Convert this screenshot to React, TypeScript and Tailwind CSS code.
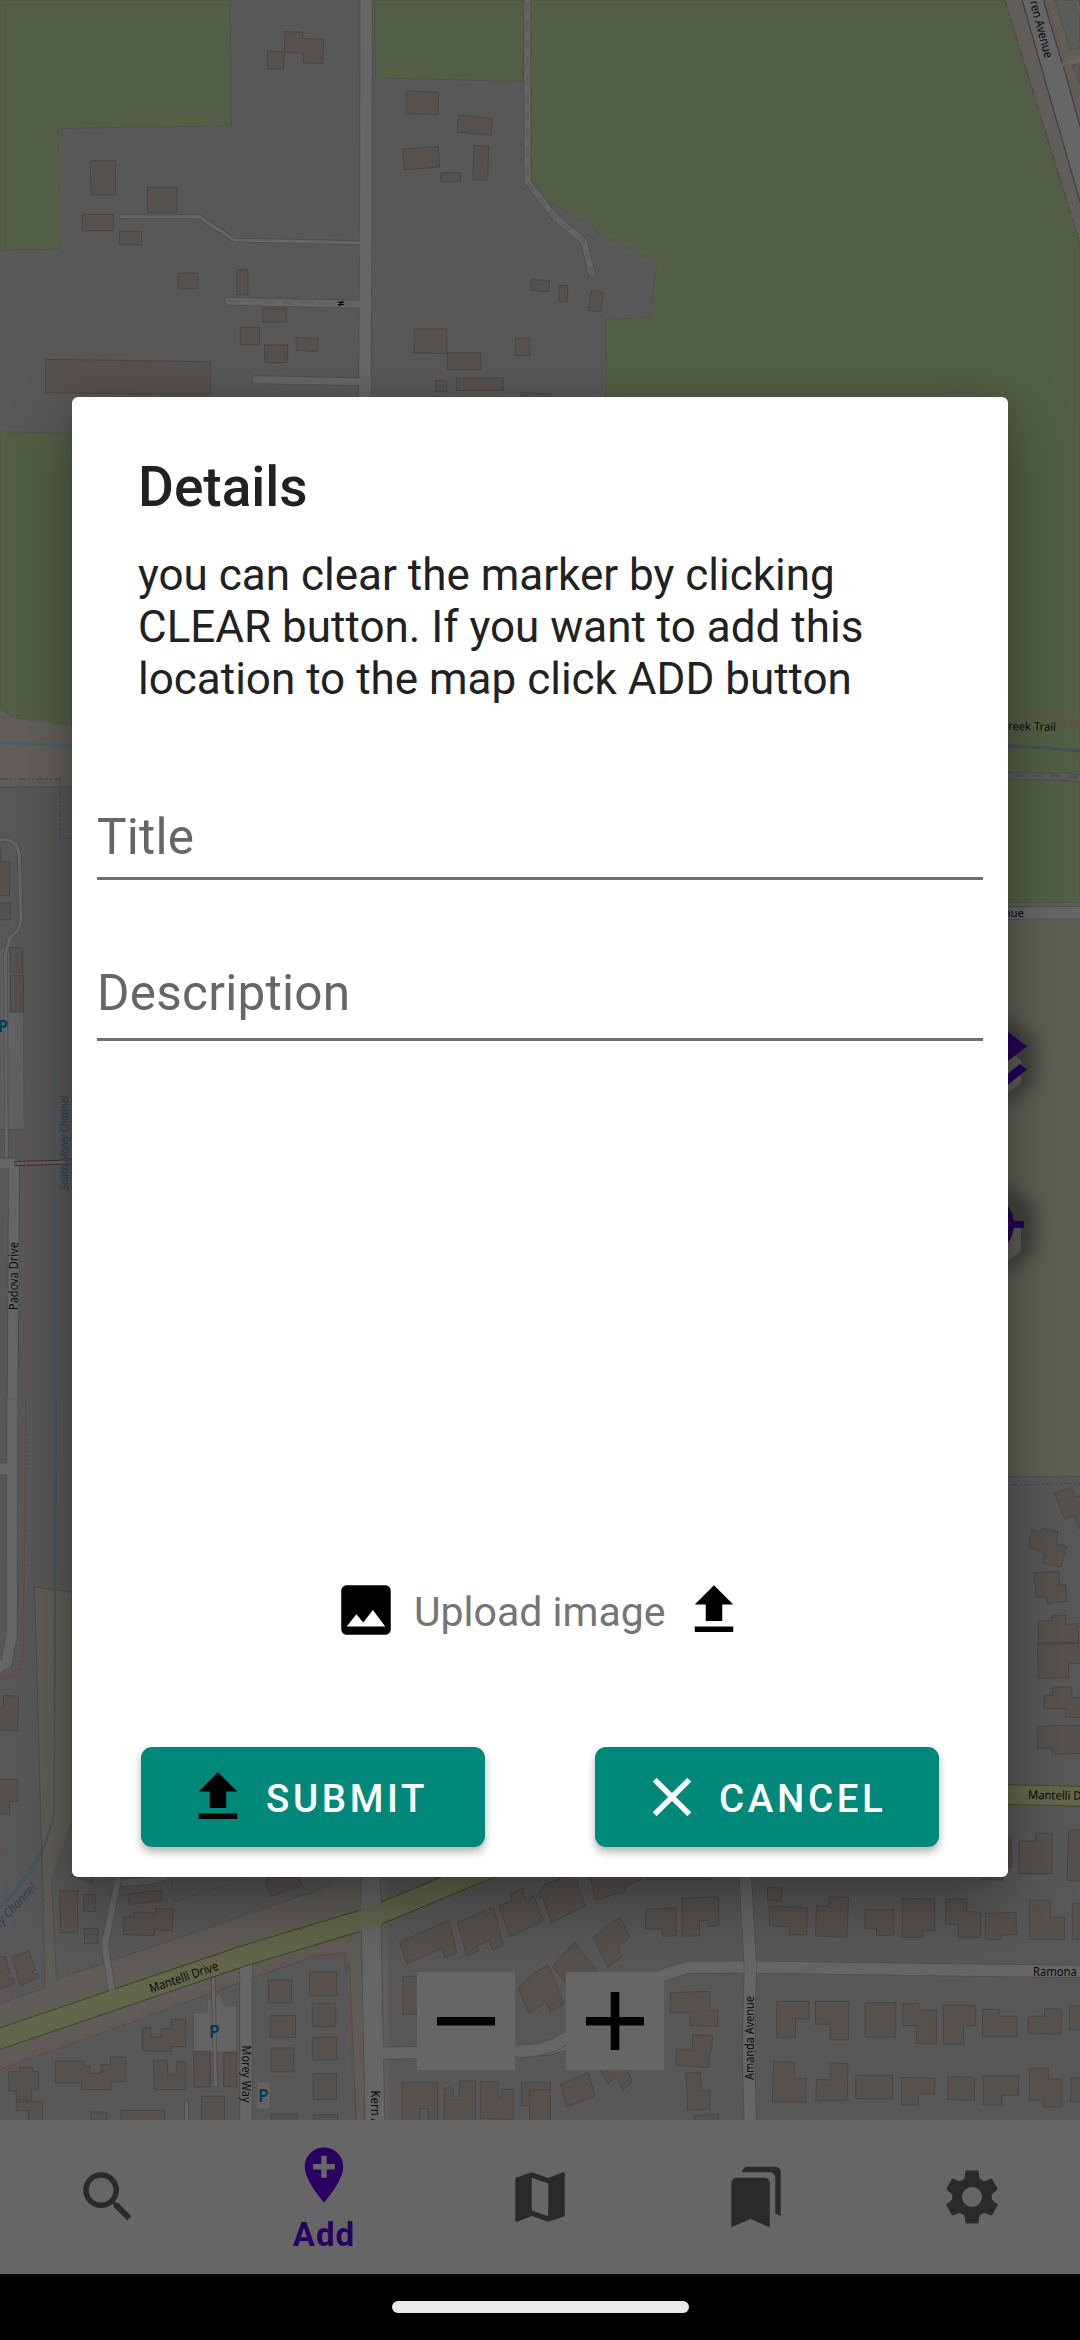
import React from 'react';
import { MdSearch, MdAddLocation, MdMap, MdBookmarks, MdSettings, MdImage, MdFileUpload, MdClose } from 'react-icons/md';

const building = { fill: '#57514d', stroke: '#4a4441', strokeWidth: 1 };

function Road({ d, w = 6, fill = '#666666', edge = '#4c4c4c', cap = 'round' as 'round' | 'butt' }) {
  return (
    <g fill="none" strokeLinecap={cap} strokeLinejoin="round">
      <path d={d} stroke={edge} strokeWidth={w + 1.6} />
      <path d={d} stroke={fill} strokeWidth={w} />
    </g>
  );
}

function Label({ x, y, len, r = 0, size = 12, color = '#0b0b0b', halo = '#666', children }: {
  x: number; y: number; len: number; r?: number; size?: number; color?: string; halo?: string; children: React.ReactNode;
}) {
  return (
    <text transform={`translate(${x} ${y}) rotate(${r})`} textLength={len} lengthAdjust="spacingAndGlyphs" fontSize={size} fill={color} stroke={halo} strokeWidth={1.5} style={{ paintOrder: 'stroke' }}>
      {children}
    </text>
  );
}

const trail = { fill: 'none', stroke: '#7d4642', strokeWidth: 1.2, strokeDasharray: '2.2 2' };
const border = { fill: 'none', stroke: '#54484f', strokeWidth: 1.4, strokeDasharray: '8 2 2 2 2 2' };

function MapView() {
  return (
    <svg className="absolute inset-0 [&_path]:[vector-effect:non-scaling-stroke]" width="1080" height="2340" viewBox="0 0 1080 2340" fontFamily="'Noto Sans', sans-serif">
      <rect width="1080" height="2340" fill="#585858" />

      {/* fields north of the creek */}
      <g transform="scale(.34439 .33333)">
        <g fill="#525e45" stroke="#4c5244" strokeWidth="0.7">
          <path d="M0 0H668L672 377L350 382L168 386L173 748L0 751Z" />
          <path d="M1087 0H1522L1518 245L1090 233Z" />
          <path d="M1540 0H2918L3136 730V2710H1758V957L1888 952L1907 788L1740 700L1580 592L1542 540Z" />
        </g>
        <Road d="M1063 0L1062 700L1059 1200" w={11.5} cap="butt" />
        <Road d="M352 650H578L680 720L1046 728" w={3} />
        <Road d="M664 904L1044 913" w={7} />
        <path d="M668 904L950 910M1002 912H1044" fill="none" stroke="#606060" strokeWidth="3" strokeLinecap="round" strokeDasharray="8 10" />
        <path d="M981 907H999M981 914H999M994 902L986 919" fill="none" stroke="#111" strokeWidth="1.2" />
        <Road d="M744 1139L1046 1145" w={7} />
        <path d="M1061 690V760M1061 890V935M1060 1130V1160" stroke="#666" strokeWidth="11.5" />
        <Road d="M1531 0L1532 545L1610 650L1696 725L1718 820" w={6} />
        <path d="M1531 12L1532 545L1610 650L1696 725L1718 820" fill="none" stroke="#5e5e5e" strokeWidth="3" strokeLinecap="round" strokeDasharray="8 10" />
        <path {...building} d="M827 95L879 97V116L940 118L937 191L881 189V159L826 157ZM776 153L826 156L823 208L776 206ZM1181 273L1274 277L1271 344L1179 341ZM1332 345L1431 356L1426 406L1327 396ZM1170 447L1272 439L1277 501L1174 509ZM1377 437L1419 439L1416 541L1373 539ZM1280 519H1338V545H1280ZM262 482H335L336 584H264ZM428 562H513V637H428ZM239 643H329V692H239ZM347 694H411V734H347ZM517 819H574V866H517ZM688 808H720V884H688ZM763 925H831V966H763ZM698 982H754V1034H698ZM860 1012L924 1015L922 1055L860 1051ZM768 1035H835V1088H768ZM132 1078L612 1085V1185L132 1178ZM1203 987H1297V1061L1202 1058ZM1299 1058H1396V1109H1299ZM1496 1015H1538V1067H1496ZM1266 1141H1297V1175H1265ZM1325 1134H1461V1171H1325ZM1511 1178L1599 1181V1220H1511ZM1543 838L1596 842L1593 875L1540 870ZM1624 856H1648V905H1624ZM1718 871L1752 877L1744 935L1708 930Z" />
      </g>

      {/* avenue in the north-east corner */}
      <g transform="translate(540 0) scale(.34439 .33333)">
        <path d="M1350 0H1568V730Z" fill="#625e5a" />
        <path d="M1478 0H1568V300Z" fill="#635f53" />
        <path d="M1495 0L1540 150L1568 143V0ZM1545 195L1568 190V255Z" fill="#5b5b58" stroke="#4c4c48" strokeWidth=".8" />
        <path d="M1555 0L1568 30" fill="none" stroke="#6c6c6c" strokeWidth="1" />
        <path d="M1400 0L1480 290L1568 605V380L1518 195L1462 0Z" fill="#666" />
        <path d="M1518 186L1568 170V188L1520 197Z" fill="#666" />
        <path d="M1400 0L1480 290L1568 605M1462 0L1516 190M1520 198L1568 380" fill="none" stroke="#3f3f3f" strokeWidth="1.2" />
        <path {...trail} d="M1470 0L1568 330" />
        <path {...border} d="M1350 0L1430 270L1568 730" />
      </g>
      <Label x={1027} y={-8} len={69} r={75} size={12.5}>Wren Avenue</Label>

      {/* western strip beside the channel */}
      <path d="M0 432L72 433V730L12 717L0 709Z" fill="#525e45" stroke="#4a5242" strokeWidth=".7" />
      <g transform="translate(0 700) scale(.33333 .44643)">
        <path d="M0 20L40 41L216 58V195H0Z" fill="#635f5b" />
        <path d="M0 181H216V195H0Z" fill="#605e57" />
        <path d="M0 195H216" stroke="#4c4c4c" strokeWidth="1" />
        <path d="M0 38L216 45" fill="none" stroke="#6a5550" strokeWidth="1.2" strokeDasharray="4 2" />
        <path d="M0 96L216 103" fill="none" stroke="#47606b" strokeWidth="2.5" />
        <path {...border} d="M0 177H180V310H216" />
        <path d="M216 205Q185 285 173 400L170 1568" fill="none" stroke="#47606b" strokeWidth="1.3" />
        <path d="M0 555H68L73 962H0Z" fill="#626262" stroke="#555053" strokeWidth="1" />
        <Road d="M-6 313H25L48 323L58 345L63 495L52 517L28 535L17 570L19 1030" w={3} />
        <Road d="M-8 1038H42L38 1568" w={10} />
        <path {...building} d="M-4 330H2V363H29V438H-4ZM-4 455H32V492H-4ZM30 555H68V611H30ZM31 616H71V699H31Z" />
        <path d="M43 1038L216 1035" stroke="#303030" strokeWidth="5" />
        <path d="M44 1038L216 1035" stroke="#6b6260" strokeWidth="3" />
        <path {...trail} d="M0 979L55 983L78 1015V1568" />
        <path {...trail} d="M46 1038L216 1035" />
      </g>
      <text x="-2" y="1032" fontSize="16" fontWeight="600" fill="#003a5c">P</text>
      <Label x={68} y={1190} len={94} r={-90} size={11.5} color="#28405c" halo="#555"><tspan fontStyle="italic">South Morey Channel</tspan></Label>
      <Label x={18} y={1310} len={68} r={-90} size={12}>Padova Drive</Label>

      <g transform="translate(0 1400) scale(.33333)">
        <path d="M104 561L216 577V1270L153 1440L155 1500H128L122 1240Z" fill="#605e57" stroke="#4b4a45" strokeWidth=".8" />
        <Road d="M-8 207H30" w={11} />
        <Road d="M37 -4L35 702L20 790L-6 802" w={10.5} cap="butt" />
        <path d="M10 191H24V223H10Z" fill="#666" />
        <path {...trail} stroke="#84342e" d="M77 0L71 700L69 770L48 828L-4 838M0 1340L6 1375" />
        <path d="M169 0L162 1240Q145 1350 20 1500" fill="none" stroke="#3f5660" strokeWidth="1.5" />
        <path {...building} d="M-4 924H10V886L56 889L53 992L-4 989ZM-4 1138H53V1204H29V1242H-4Z" />
      </g>

      {/* eastern strip */}
      <path d="M1008 903H1080V1476H1008Z" fill="#5f5f56" />
      <g transform="translate(960 640) scale(.33333 .44643)">
        <path d="M120 170Q210 163 360 182M200 174Q280 174 360 196" fill="none" stroke="#7d4642" strokeWidth="1.4" strokeDasharray="3 2.5" />
        <path d="M120 237Q230 238 360 249" fill="none" stroke="#435058" strokeWidth="3" />
        <Road d="M120 304L320 306L370 312" w={6} fill="#5c5c5c" />
        <path d="M168 304H320L370 311" fill="none" stroke="#515151" strokeWidth="3" strokeLinecap="round" strokeDasharray="7 11" />
        <Road d="M120 611H370" w={12} />
        <path d="M120 597H370" stroke="#505050" strokeWidth="1" />
      </g>
      <Label x={1001} y={730} len={55} r={1} size={11.5} halo="#525e45">Creek Trail</Label>
      <Label x={984} y={917} len={40} size={11.5}>Avenue</Label>
      <g transform="translate(960 1340) scale(.33333 .35714)">
        <path d="M120 382H360" stroke="#4f4e48" strokeWidth="1" />
        <path {...border} d="M150 406L360 401" />
        <path {...building} d="M283 429L333 412L345 441L366 435V540L340 491L314 500ZM214 530L243 539L246 527L294 537L289 571L321 578L302 635L247 625L255 597L204 580ZM222 653L295 647L299 686L317 684L321 732L262 737L259 719L229 720ZM235 788L275 785V772L317 770V796L353 795L356 846L236 849ZM232 853L366 848V906H326V946L235 948ZM252 995H277V972H335V1001H366V1057H316V1032H252ZM231 1082L366 1078V1158L275 1160V1142L232 1143ZM140 1392H153V1478L128 1480V1512L62 1510V1480ZM178 1404H227V1382H275V1494H178ZM328 1395L366 1396V1515L322 1513Z" />
        <Road d="M120 1272L370 1278" w={19} fill="#62664a" edge="#3d4218" />
      </g>
      <Label x={1028} y={1799} len={73} r={1} size={12} halo="#62664a">Mantelli Drive</Label>

      {/* streets south of the dialog, west half */}
      <g transform="translate(0 1840) scale(.34439 .33333)">
        <path d="M-6 494L128 444L130 0H194L150 120L164 418L300 372L960 136L1010 80H1125L1130 900H1040L1015 370L1000 338L920 346L730 410L400 540L-6 690Z" fill="#605d58" />
        <path d="M-6 494L130 443L122 0M192 0L150 120L164 418L965 136L1000 98M-6 690L400 540L730 415L920 346L1000 338L1005 400L1015 370L1036 900M496 118L508 184L712 117" fill="none" stroke="#4d4d4d" strokeWidth=".9" />
        <path d="M562 518L600 516L603 480L640 461L652 499L687 497V636H562ZM745 725H785V808H745Z" fill="#646262" stroke="#555053" strokeWidth=".8" />
        <Road d="M347 128L430 124L510 100" w={6.5} />
        <Road d="M346 100L304 316L326 460" w={6.5} />
        <Road d="M619 405L626 736" w={2.8} />
        <Road d="M714 370V900" w={11.5} />
        <Road d="M542 787V900" w={3} />
        <Road d="M1075 0L1080 400L1090 900" w={19} />
        <Road d="M1116 640L1500 631L1590 628L1665 605" w={11.5} cap="butt" />
        <path d="M1084 622H1120V656H1086Z" fill="#666" />
        <Road d="M-40 610L700 350L1078 232L1500 50" w={19.5} fill="#62664a" edge="#353b10" cap="butt" />
        <path d="M1047 195L1106 176L1108 255L1050 278Z" fill="#666664" />
        <path d="M1048 205L1106 182L1108 250L1050 272Z" fill="#646652" />
        <path d="M697 385L732 373V410H697Z" fill="#666" />
        <path d="M316 452L334 446V456L318 462Z" fill="#666" />
        <path {...trail} d="M0 681L340 552L700 415M734 403L900 343L958 331L1000 350L1015 385L1019 600L1024 850" />
        <path {...trail} d="M0 20L6 45L-2 62" />
        <path d="M136 0Q90 130 -6 206" fill="none" stroke="#3f5660" strokeWidth="1.5" />
        <path {...building} d="M175 152H225V278H175ZM243 163H278V214H243ZM245 265H284V310H245ZM205 106L270 110L267 128ZM370 163L467 150L469 181L375 194ZM358 230L390 229V216L452 219L454 205L504 209L500 272L448 269V287L358 283ZM770 118L790 112H868L877 136L787 169ZM-6 354L15 348L28 402H21L25 418L38 416L42 430L-6 450ZM36 352L85 333L102 390L94 392L96 402H108L112 413L59 437ZM414 562H438V592H468V565H497V538H539V620H498V635L414 632ZM161 664H243V678H262V700H294V674H320V651H365V724H323V749H236V728H161ZM446 661H486V704H512V665H539V749H448ZM25 695H57V682H94V695H112V748H92V779H47V753H26ZM47 784H124V900H82V812H48ZM265 816H310V900H265ZM351 811H478V900H351ZM562 634H611V740L564 742ZM650 637H687V740H650ZM585 769H652V900H585ZM779 420H847V488H779ZM785 527H858V592H785ZM786 624H853V695H786ZM898 396H978V468H898ZM907 490H975V560H907ZM907 592H978V660H907ZM910 701H977V778H910ZM787 822H863V900H787ZM910 824H980V900H910ZM1161 307L1302 241L1327 337L1291 353L1283 325L1181 371ZM1328 247L1432 201L1461 314L1430 331L1420 300L1386 318L1388 335L1356 348ZM1449 199L1487 178L1482 163L1517 144L1527 178L1550 168L1577 243L1481 290ZM1170 409H1240V523H1170ZM1168 727H1271V900H1243V807H1219V900H1168ZM1290 744H1316V769H1334V723H1380V900H1288ZM1395 725H1446V771H1457V748H1490V838L1395 836ZM1514 727H1598V900H1543V798H1514Z" />
      </g>
      <Label x={151} y={1993} len={72} r={-19} size={12.5} halo="#62664a">Mantelli Drive</Label>
      <Label x={242} y={2045.5} len={57} r={90} size={12}>Morey Way</Label>
      <Label x={371} y={2090.5} len={68} r={90} size={12}>Kern Avenue</Label>
      <Label x={-4} y={1932} len={60} r={-47} size={12.5} color="#28405c" halo="#585858"><tspan fontStyle="italic">rey Channel</tspan></Label>
      <g fontSize="17" fontWeight="600" fill="#003a5c"><text x="209" y="2038">P</text><text x="258" y="2102">P</text></g>

      {/* east half */}
      <g transform="translate(540 1840) scale(.34439 .33333)">
        <Road d="M-60 635L0 628L40 615L120 570L340 412L428 382L594 381L1600 395" w={11.5} />
        <Road d="M595 90L611 380L605 640L612 900" w={11.5} cap="butt" />
        <path d="M593 368H629V399H593Z" fill="#666" />
        <path {...building} d="M-8 170L12 135L100 100L131 198L34 248L8 170ZM145 105L296 100V118L247 136L249 153L161 181ZM308 100H498V119H308ZM155 291L232 231L260 291L226 318L241 349L197 381ZM37 380L100 306L163 391L90 450ZM-63 445L-20 400L24 375L69 492L31 516L18 487L-32 520ZM60 733L140 699L160 767L78 801ZM170 680H250L268 727L241 749L222 711L197 731ZM-30 750H30V900H-30ZM306 208L394 205L396 287L356 289L355 266L307 268ZM412 174L519 171V257L486 258L485 241H463V287L413 289ZM661 142L702 145L699 182L660 180ZM667 198L777 203L774 285L725 283V261L666 255ZM803 197L838 199L841 170L896 172L891 292L800 288ZM943 209H1027V286H977V265H943ZM1053 175L1146 178V271H1111V292H1051ZM1180 178H1239V216H1280V292H1215V254L1177 252ZM1293 220L1382 217L1384 283L1338 286V298H1293ZM1421 181H1483V232H1523V298H1421ZM1546 190H1600V298H1546ZM1280 90H1343V119H1280ZM1391 4H1440V-20H1486V101H1391ZM1535 -30H1600V122H1530ZM1360 0H1367V83H1360ZM378 458L493 454V511H516V559L436 557V518H378ZM444 583L501 588L498 632L493 635L490 683L394 676L396 627L442 629ZM423 699L466 697L469 751H493V807L429 811ZM450 827L519 823V900H450ZM687 484H781V536H742V592H687ZM800 484H896V599H843V553H800ZM944 488H1033V592H944ZM1054 491H1103V511H1151V611H1093V557H1054ZM1171 496H1265V558H1230V613H1171ZM1285 508H1334V529H1384V590H1285ZM1418 529H1464L1466 505L1515 508L1512 583L1416 579ZM1537 497H1600V569H1537ZM678 664L739 667V714L772 716L771 787L675 785ZM803 718L842 720L844 669L894 671L892 782H801ZM917 706H1024V776H917ZM1049 712L1146 714V762H1099V795L1049 794ZM1185 710L1262 712L1261 781L1183 778ZM1287 707H1390V766H1341V795H1287ZM1421 685H1476V717H1515V800H1460V781H1421ZM1541 714H1600V785H1541Z" />
      </g>
      <Label x={754} y={2080} len={84} r={-90} size={12.5}>Amanda Avenue</Label>
      <Label x={1033} y={1976} len={69} size={12}>Ramona Way</Label>

      {/* hexagonal map controls at the right edge */}
      {[1058, 1226].map((cy) => (
        <g key={cy}>
          <path d={`M1000 ${cy - 44}L1036 ${cy - 20}V${cy + 24}L1000 ${cy + 54}Z`} fill="#000" opacity=".3" style={{ filter: 'blur(8px)' }} />
          <path d={`M1000 ${cy - 14}L1021 ${cy + 2}V${cy + 25}L1000 ${cy + 41}Z`} fill="#5c5c55" />
        </g>
      ))}
      <path d="M1000 1026L1027 1046.3L1000 1067ZM1000 1080L1019.7 1064L1027 1069.5L1000 1091Z" fill="#26005c" />
      <path d="M1000 1196Q1011 1206 1014 1221H1024V1228H1014Q1011 1243 1000 1252Z" fill="#26005c" />
    </svg>
  );
}

const navItems = [
  { Icon: MdSearch, label: '' },
  { Icon: MdAddLocation, label: 'Add' },
  { Icon: MdMap, label: '' },
  { Icon: MdBookmarks, label: '' },
  { Icon: MdSettings, label: '' },
];

function Dialog() {
  return (
    <section className="relative mx-[72px] mt-[397px] flex h-[1480px] flex-col rounded-[6px] bg-white px-[25px] shadow-[0_26px_64px_rgba(0,0,0,0.34),0_0_22px_rgba(0,0,0,0.1)]">
      <h1 className="ml-[41px] mt-[58px] h-[64px] text-[55px] font-medium leading-[64px] text-[#212121]">Details</h1>
      <p className="ml-[41px] mt-[30px] whitespace-nowrap text-[44px] leading-[52px] text-[#212121]">
        you can clear the marker by clicking<br />CLEAR button. If you want to add this<br />location to the map click ADD button
      </p>
      <input placeholder="Title" className="mt-[78px] h-[97px] w-full border-b-3 border-[#6f6f6f] bg-transparent pt-[13px] text-[49.5px] tracking-[0.25px] outline-none placeholder:text-[#666]" />
      <input placeholder="Description" className="mt-[62px] h-[99px] w-full border-b-3 border-[#6f6f6f] bg-transparent pt-[6px] text-[49.5px] tracking-[0.25px] outline-none placeholder:text-[#666]" />
      <div className="ml-[236px] mt-[536px] flex h-[66px] items-center">
        <MdImage size={66} color="#000" />
        <span className="ml-[15px] w-[267px] whitespace-nowrap pt-[3px] text-[41px] leading-[48px] text-[#757575]">Upload image</span>
        <MdFileUpload size={66} color="#000" />
      </div>
      <div className="mx-[44px] mt-[104px] flex justify-between text-[38.5px] font-medium tracking-[3.65px] text-white">
        <button className="flex h-[100px] w-[344px] items-center rounded-[11px] bg-[#00897b] pl-[44px] shadow-[0_5px_8px_rgba(0,0,0,0.3)]">
          <MdFileUpload size={66} color="#000" />
          <span className="ml-[15px] pt-[3px]">SUBMIT</span>
        </button>
        <button className="flex h-[100px] w-[344px] items-center rounded-[11px] bg-[#00897b] pl-[44px] shadow-[0_5px_8px_rgba(0,0,0,0.3)]">
          <MdClose size={66} color="#fafafa" />
          <span className="ml-[14px] pt-[3px]">CANCEL</span>
        </button>
      </div>
    </section>
  );
}

export default function App() {
  return (
    <main className="relative flex h-[2340px] w-[1080px] flex-col overflow-hidden font-['Roboto',sans-serif]">
      <MapView />
      <Dialog />
      <div className="relative mt-[95px] flex justify-center gap-[51px]">
        <button className="flex size-[98px] items-center justify-center bg-[#666]">
          <svg width="58" height="58" viewBox="0 0 58 58"><path d="M0 25H58V33.5H0Z" /></svg>
        </button>
        <button className="flex size-[98px] items-center justify-center bg-[#666]">
          <svg width="58" height="58" viewBox="0 0 58 58"><path d="M0 25H24.7V0H33.3V25H58V33.5H33.3V58H24.7V33.5H0Z" /></svg>
        </button>
      </div>
      <nav className="relative mt-[50px] grid h-[154px] grid-cols-5 bg-[#666]">
        {navItems.map(({ Icon, label }, i) => (
          <div key={i} className="flex flex-col items-center">
            {label ? (
              <>
                <Icon size={66} color="#280062" className="mt-[22px]" />
                <span className="mt-[8px] text-[33px] font-bold leading-[38px] tracking-[1px] text-[#280062]">{label}</span>
              </>
            ) : (
              <Icon size={66} color="#2a2a2a" className="mt-[44px]" />
            )}
          </div>
        ))}
      </nav>
      <footer className="relative flex h-[66px] justify-center bg-black pt-[27px]">
        <div className="h-[12px] w-[297px] rounded-full bg-[#ebebeb]" />
      </footer>
    </main>
  );
}
